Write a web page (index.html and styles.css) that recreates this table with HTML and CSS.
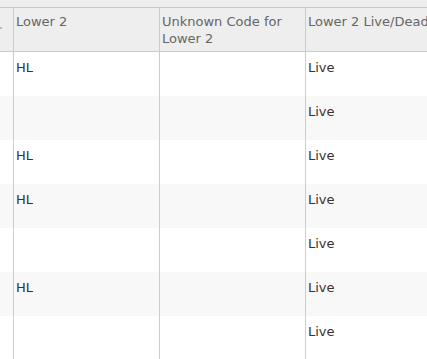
FILE: index.html
```html
<!DOCTYPE html>
<html>
<head>
<meta charset="utf-8">
<link rel="stylesheet" href="styles.css">
</head>
<body>
<div class="topbar"></div>
<div class="table">
  <div class="row head">
    <div class="cell first"><span class="tail"></span></div>
    <div class="cell">Lower 2</div>
    <div class="cell">Unknown Code for Lower 2</div>
    <div class="cell">Lower 2 Live/Dead</div>
  </div>
  <div class="row">
    <div class="cell first"></div><div class="cell">HL</div><div class="cell"></div><div class="cell">Live</div>
  </div>
  <div class="row alt">
    <div class="cell first"></div><div class="cell"></div><div class="cell"></div><div class="cell">Live</div>
  </div>
  <div class="row">
    <div class="cell first"></div><div class="cell">HL</div><div class="cell"></div><div class="cell">Live</div>
  </div>
  <div class="row alt">
    <div class="cell first"></div><div class="cell">HL</div><div class="cell"></div><div class="cell">Live</div>
  </div>
  <div class="row">
    <div class="cell first"></div><div class="cell"></div><div class="cell"></div><div class="cell">Live</div>
  </div>
  <div class="row alt">
    <div class="cell first"></div><div class="cell">HL</div><div class="cell"></div><div class="cell">Live</div>
  </div>
  <div class="row">
    <div class="cell first"></div><div class="cell"></div><div class="cell"></div><div class="cell">Live</div>
  </div>
</div>
</body>
</html>
```
FILE: styles.css
```css
html, body {
  margin: 0;
  padding: 0;
  background: #ffffff;
  overflow: hidden;
  width: 427px;
  height: 359px;
}
body {
  font-family: "DejaVu Sans", Verdana, sans-serif;
  font-size: 13px;
  line-height: 17px;
  color: #333333;
}
.topbar {
  height: 7px;
  background: #eeeeee;
  border-bottom: 1px solid #c6c9bd;
}
.table {
  width: 460px;
}
.row {
  display: grid;
  grid-template-columns: 13px 146px 146px 155px;
  height: 44px;
  background: #ffffff;
}
.row.alt {
  background: #f7f8f7;
}
.row.head {
  height: 43px;
  background: #eeeeee;
  border-bottom: 1px solid #cccccc;
  color: #666666;
}
.cell {
  border-left: 1px solid #cccccc;
  padding: 7px 4px 0 2px;
  white-space: normal;
  overflow: hidden;
}
.head .cell {
  padding-top: 5px;
}
.cell.first {
  border-left: none;
  padding: 0;
  position: relative;
}
.tail {
  position: absolute;
  left: 0;
  top: 19px;
  width: 2px;
  height: 2px;
  background: #bbbbbb;
}
.row:not(.head) .cell:nth-child(4) {
  white-space: nowrap;
}
.head .cell:nth-child(4) {
  white-space: nowrap;
}
```
